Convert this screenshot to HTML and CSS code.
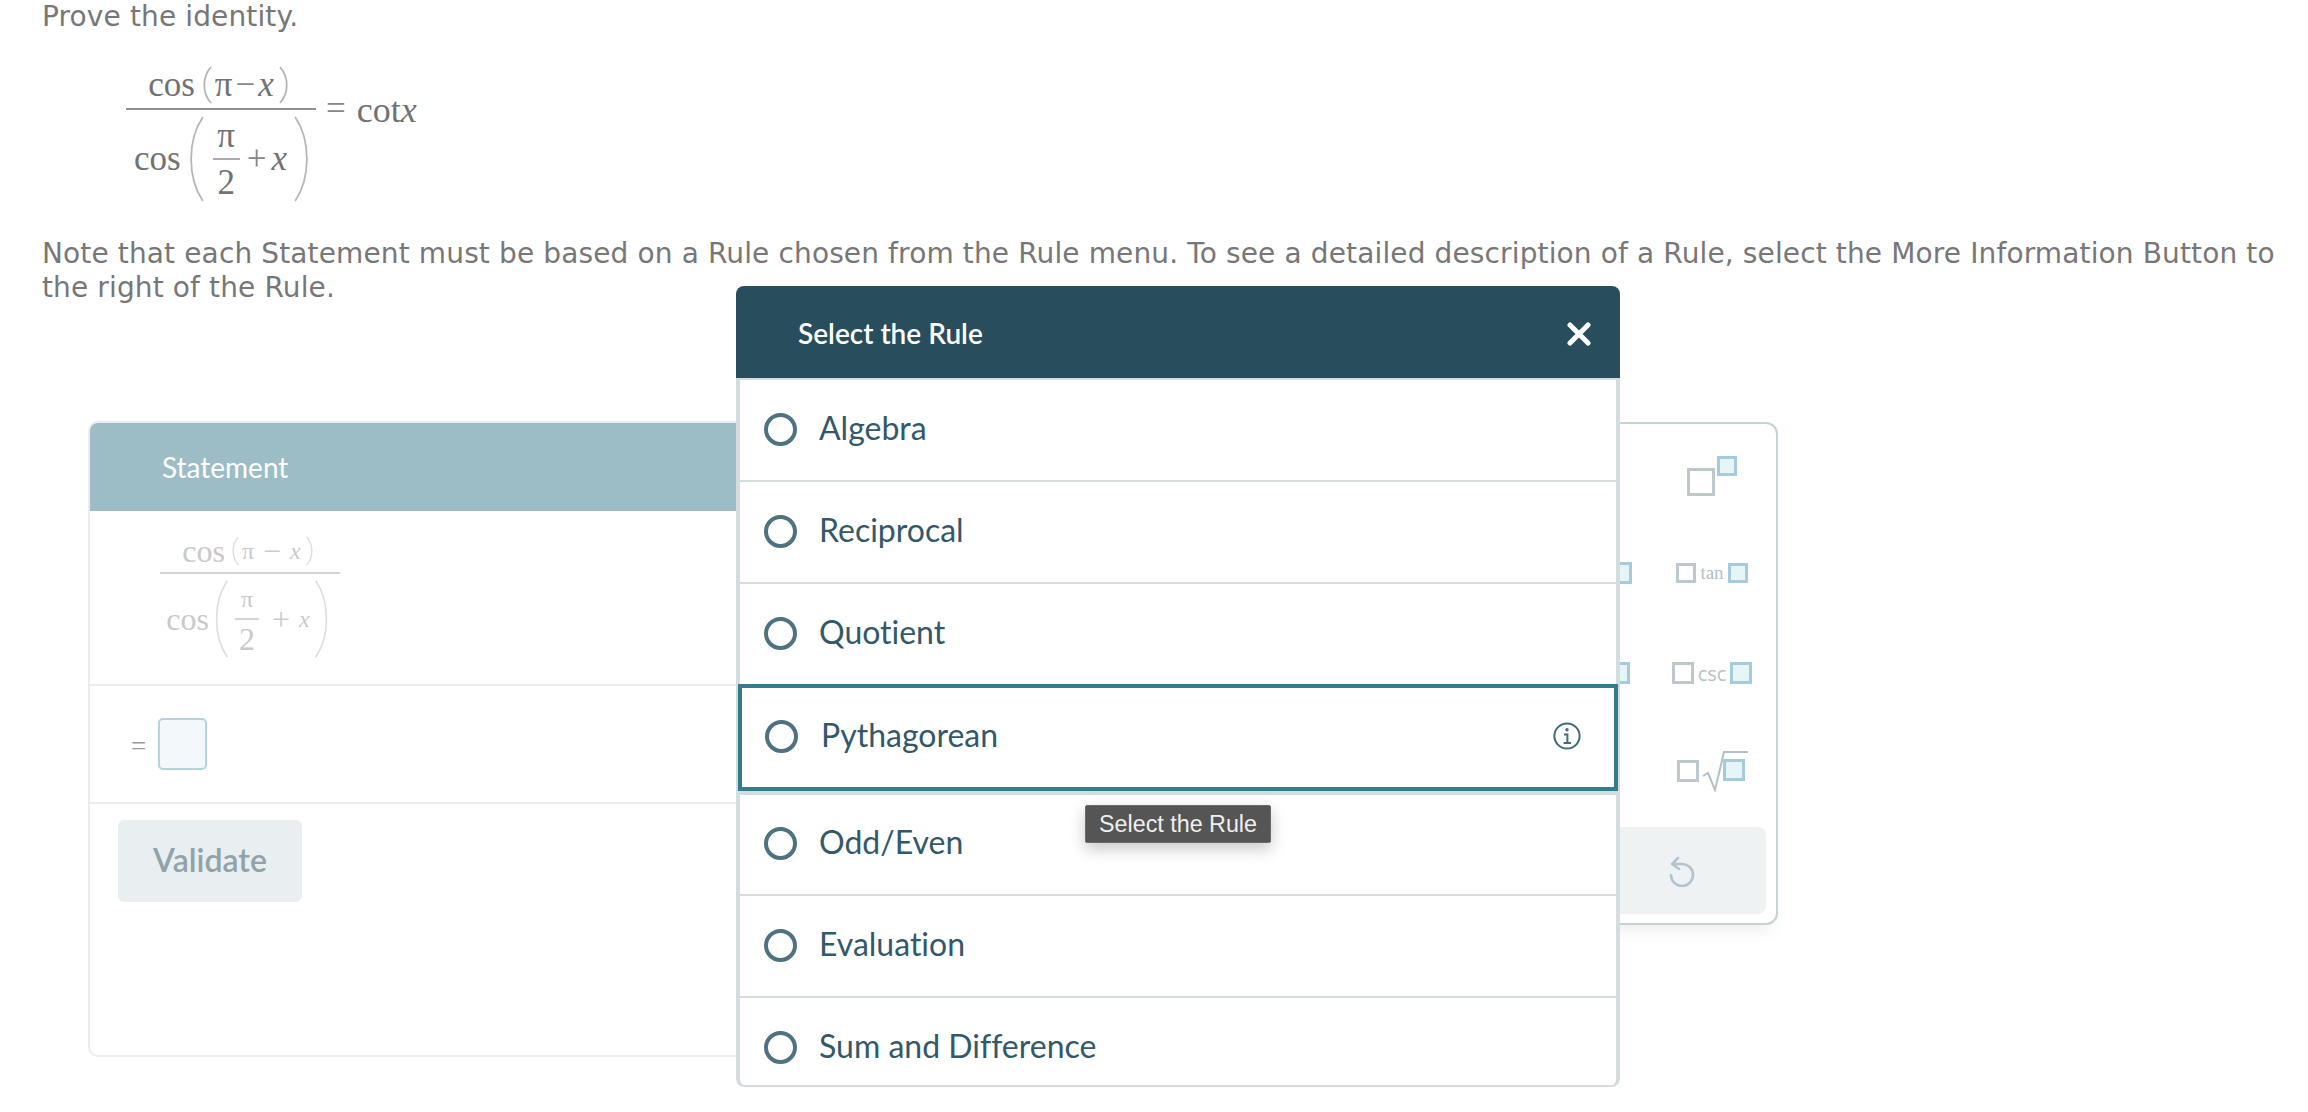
FILE: index.html
```html
<!DOCTYPE html>
<html lang="en">
<head>
<meta charset="utf-8">
<title>Prove the identity</title>
<link rel="stylesheet" href="styles.css">
</head>
<body>
<main class="page">
  <p class="prompt first">Prove the identity.</p>
  <div class="math main-math">
    <div class="frac">
      <div class="num"><span>cos</span><svg class="paren sm" viewBox="0 0 14 40"><path d="M12 2C3 12 3 28 12 38"/></svg><span class="sym">π</span><span class="op">−</span><i>x</i><svg class="paren sm" viewBox="0 0 14 40"><path d="M2 2C11 12 11 28 2 38"/></svg></div>
      <div class="bar"></div>
      <div class="den"><span class="den-cos">cos</span><svg class="paren lg" viewBox="0 0 20 90"><path d="M17 2C1 26 1 64 17 88"/></svg><div class="frac inner"><span class="sym">π</span><div class="bar thin"></div><span>2</span></div><span class="op plus">+</span><i>x</i><svg class="paren lg" viewBox="0 0 20 90"><path d="M3 2C19 26 19 64 3 88"/></svg></div>
    </div>
    <span class="eq">=</span><span class="cot">cot<i>x</i></span>
  </div>
  <p class="prompt note">Note that each Statement must be based on a Rule chosen from the Rule menu. To see a detailed description of a Rule, select the More Information Button to the right of the Rule.</p>

  <section class="card">
    <header class="card-head">Statement</header>
    <div class="row row-math">
      <div class="math pale">
        <div class="frac">
          <div class="num"><span>cos</span><svg class="paren xs" viewBox="0 0 14 40"><path d="M12 2C3 12 3 28 12 38"/></svg><span class="sym small">π</span><span class="op wide">−</span><i class="small">x</i><svg class="paren xs" viewBox="0 0 14 40"><path d="M2 2C11 12 11 28 2 38"/></svg></div>
          <div class="bar"></div>
          <div class="den"><span>cos</span><svg class="paren md" viewBox="0 0 20 90"><path d="M17 2C1 26 1 64 17 88"/></svg><div class="frac inner"><span class="sym small">π</span><div class="bar thin"></div><span>2</span></div><span class="op wide">+</span><i class="small">x</i><svg class="paren md" viewBox="0 0 20 90"><path d="M3 2C19 26 19 64 3 88"/></svg></div>
        </div>
      </div>
    </div>
    <div class="row row-input"><span class="input-eq">=</span><span class="input-box"></span></div>
    <div class="actions"><button class="validate" type="button">Validate</button></div>
  </section>
</main>

<aside class="palette">
  <div class="palette-grid">
    <div class="cell"></div>
    <div class="cell sup"><span class="b grey big"></span><span class="b blue raised"></span></div>
    <div class="cell left-cut"><span class="b blue mid"></span></div>
    <div class="cell"><span class="b grey"></span><span class="fn">tan</span><span class="b blue"></span></div>
    <div class="cell left-cut second"><span class="b blue mid"></span></div>
    <div class="cell"><span class="b grey mid"></span><span class="fn sans">csc</span><span class="b blue mid"></span></div>
    <div class="cell"></div>
    <div class="cell root"><span class="b grey mid"></span><span class="radical"><svg viewBox="0 0 46 42"><path d="M1 26L6 23L13 40L22 2H46"/></svg><span class="b blue mid"></span></span></div>
  </div>
  <div class="undo">
    <svg viewBox="0 0 28 32"><path d="M10 3L4 9L11 14"/><path d="M5 9H13A11 11 0 1 1 3 20"/></svg>
  </div>
</aside>

<div class="modal" role="dialog">
  <header class="modal-head"><span>Select the Rule</span>
    <svg class="close" viewBox="0 0 24 24"><path d="M3 3L21 21M21 3L3 21"/></svg>
  </header>
  <ul class="rules">
    <li class="rule"><span class="radio"></span><span class="label">Algebra</span></li>
    <li class="rule"><span class="radio"></span><span class="label">Reciprocal</span></li>
    <li class="rule"><span class="radio"></span><span class="label">Quotient</span></li>
    <li class="rule active"><span class="radio"></span><span class="label">Pythagorean</span>
      <svg class="info" viewBox="0 0 28 28"><circle cx="14" cy="14" r="12.6"/><path d="M11 12.5H14.4V21M10.6 21H18"/><circle class="dot" cx="14" cy="7.8" r="1.7"/></svg>
    </li>
    <li class="rule"><span class="radio"></span><span class="label">Odd/Even</span></li>
    <li class="rule"><span class="radio"></span><span class="label">Evaluation</span></li>
    <li class="rule"><span class="radio"></span><span class="label">Sum and Difference</span></li>
  </ul>
</div>
<div class="tooltip">Select the Rule</div>
</body>
</html>
```
FILE: styles.css
```css
* { box-sizing: border-box; }
html, body { margin: 0; height: 100%; overflow: hidden; background: #fff; }
body { font-family: "DejaVu Sans", sans-serif; }
.page { padding-left: 42px; }
.prompt { margin: 0; color: #777; font-size: 28px; line-height: 34px; width: 2245px; letter-spacing: .13px; }
.first { height: 34px; margin-top: 0; }

.math { font-family: "Liberation Serif", serif; color: #727272; font-size: 35px; display: flex; align-items: center; }
.math i { font-style: italic; }
.main-math { margin: 33px 0 0 84px; height: 130px; align-items: flex-start; }
.frac { display: flex; flex-direction: column; align-items: center; }
.num, .den { display: flex; align-items: center; justify-content: center; white-space: nowrap; }
.main-math > .frac { width: 190px; }
.main-math .num { height: 40px; margin: -2px 0 3px; }
.bar { width: 100%; height: 2px; background: #8f8f8f; flex: none; }
.main-math .den { height: 88px; margin-top: 5px; padding-left: 7px; }
.paren { fill: none; stroke: #b5b5b5; stroke-width: 1.8; flex: none; }
.paren.sm { width: 14px; height: 40px; margin: 0 2px 0 4px; }
.paren.lg { width: 20px; height: 88px; margin: 0 3px 0 5px; }
.main-math .inner { width: 27px; margin: 0 7px 0 4px; line-height: 41px; }
.main-math .inner .thin { height: 2px; margin: 2px 0; background: #aaa; }
.op { color: #888; }
.main-math .num .op { margin: 0 3px; }
.plus { margin-right: 5px; }
.eq { margin: 22px 0 0 10px; color: #888; }
.cot { margin: 22px 0 0 11px; font-size: 36px; }

.note { margin-top: 40px; line-height: 34px; }

.card { width: 1500px; height: 636px; margin: 116px 0 0 46px; border: 2px solid #e8eeef; border-radius: 10px; overflow: hidden; font-family: Lato, sans-serif; }
.card-head { height: 88px; background: #9dbdc6; color: #fff; font-size: 28px; padding: 0 0 0 72px; display: flex; align-items: center; }
.row { border-bottom: 2px solid #e8eeef; }
.row-math { height: 175px; padding: 20px 0 0 70px; }
.pale { color: #c9c9c9; font-size: 32px; }
.pale > .frac { width: 180px; }
.pale .num { height: 32px; margin: 4px 0 5px; }
.pale .bar { background: #d4d4d4; height: 2px; }
.pale .den { height: 80px; margin-top: 5px; }
.pale .small { font-size: 24px; }
.paren.xs { width: 11px; height: 36px; margin: 0 2px 0 4px; stroke: #ddd; }
.paren.md { width: 20px; height: 80px; margin: 0 2px; stroke: #ddd; }
.pale .inner { width: 24px; margin: 0 4px 0 2px; line-height: 38px; }
.pale .inner .thin { height: 2px; }
.pale .op { color: #ccc; }
.pale .wide { margin: 0 9px; }
.row-input { height: 118px; padding: 0 0 0 41px; display: flex; align-items: center; gap: 12px; }
.input-eq { font-family: "Liberation Serif", serif; font-size: 27px; color: #999; margin-top: 4px; }
.input-box { width: 49px; height: 52px; background: #f3f9fb; border: 2px solid #b5d4db; border-radius: 5px; }
.actions { padding: 16px 0 0 28px; }
.validate { width: 184px; height: 82px; border: 0; border-radius: 6px; padding: 0 0 4px; background: #e9eef0; color: #8fa3ab; font: 600 32px Lato, sans-serif; }

.palette { position: absolute; left: 1560px; top: 422px; width: 218px; height: 503px; background: #fff; border: 2px solid #c5d2d6; border-radius: 12px; box-shadow: 0 12px 16px -8px rgba(120,140,150,.18); }
.palette-grid { display: grid; grid-template-columns: 72px 1fr; grid-template-rows: 98px 102px 98px 98px; height: 403px; }
.cell { display: flex; align-items: center; justify-content: center; gap: 4px; padding-left: 14px; font-family: "Liberation Serif", serif; color: #b3c1c6; font-size: 19px; }
.b { display: block; width: 20px; height: 20px; border: 3px solid; flex: none; }
.grey { border-color: #bdc8cc; background: #fff; }
.blue { border-color: #a4ccda; background: #e6f5f7; }
.b.mid { width: 22px; height: 22px; }
.b.big { width: 28px; height: 28px; }
.sup { gap: 2px; padding-top: 18px; }
.raised { margin-top: -33px; }
.sans { font-family: "Open Sans", sans-serif; font-size: 20px; }
.left-cut { padding: 0 0 0 0; justify-content: flex-end; }
.left-cut .b { margin-right: 2px; width: 20px; }
.left-cut.second .b { margin-right: 4px; }
.root { gap: 3px; }
.radical { position: relative; display: block; width: 46px; height: 42px; }
.radical svg { display: block; width: 46px; height: 42px; fill: none; stroke: #b3c1c6; stroke-width: 2; }
.radical .b { position: absolute; left: 21px; top: 9px; }
.undo { margin: 0 10px 0 0; height: 87px; background: #eff2f3; border-radius: 8px; display: flex; align-items: center; justify-content: flex-end; padding-right: 70px; }
.undo svg { width: 28px; height: 32px; fill: none; stroke: #b4c3c9; stroke-width: 2.6; stroke-linecap: round; stroke-linejoin: round; }

.modal { position: absolute; left: 736px; top: 286px; width: 884px; height: 801px; background: #fff; border-radius: 8px; overflow: hidden; font-family: Lato, sans-serif; }
.modal-head { height: 92px; background: #284d5c; color: #fff; font-size: 28px; font-weight: 600; display: flex; align-items: center; justify-content: space-between; padding: 2px 29px 0 62px; font-variant-ligatures: none; }
.close { width: 24px; height: 24px; margin-top: 2px; fill: none; stroke: #fff; stroke-width: 5; stroke-linecap: round; }
.rules { list-style: none; margin: 0; padding: 0; height: 709px; overflow: clip; overflow-clip-margin: 2px; border: solid #d3dcdf; border-width: 2px 4px 2px; border-radius: 0 0 8px 8px; }
.rule { height: 102px; border-bottom: 2px solid #d3dcdf; display: flex; align-items: center; padding: 0 0 2px 24px; color: #33586a; font-size: 32px; gap: 22px; font-variant-ligatures: none; }
.label { margin-bottom: 4px; }
.radio { width: 33px; height: 33px; border: 4px solid #4f7280; border-radius: 50%; flex: none; }
.rule.active { height: 107px; margin: -2px -2px 3px; border: 4px solid #367a8d; padding: 0 33px 3px 23px; box-shadow: 0 4px 0 #d3dcdf; gap: 23px; position: relative; }
.info { width: 28px; height: 28px; margin-left: auto; fill: none; stroke: #3f6b7c; stroke-width: 2; }
.info .dot { fill: #3f6b7c; stroke: none; }

.tooltip { position: absolute; left: 1085px; top: 805px; width: 186px; height: 38px; background: #555; border: 1px solid #6a6a6a; border-radius: 2px; color: #efefef; font: 23.3px/36px "Liberation Sans", sans-serif; text-align: center; box-shadow: 0 6px 16px rgba(0,0,0,.22); }
```
